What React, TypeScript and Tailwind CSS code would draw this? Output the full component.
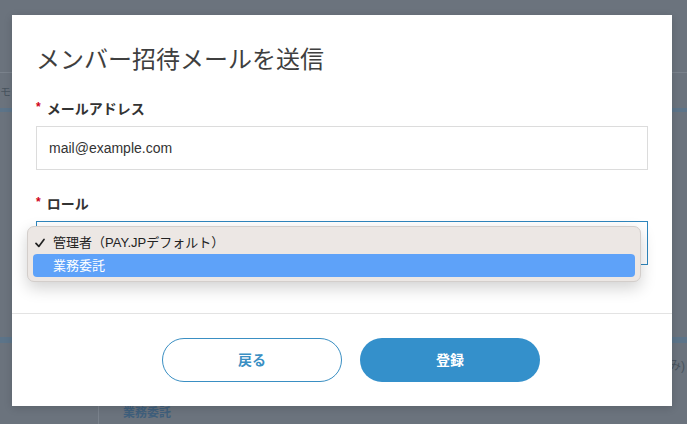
import React from 'react';

const FONT = '"Liberation Sans", "Noto Sans CJK JP", sans-serif';

/** 背景のページ（オーバーレイで暗くなっている部分） */
function BackgroundPage() {
  return (
    <div className="absolute inset-0 flex flex-col bg-[#6b737d] text-[#48535e]">
      <div className="h-[73px] shrink-0 border-b border-[#7a828c]" />
      <div className="mt-[11px] h-[16px] text-[11px] leading-[16px]">モ</div>
      <div className="mt-[8px] h-[5px] bg-[#5c7489]" />
      <div className="mt-[225px] h-[6px] bg-[#5c7489]" />
      <div className="mt-[16px] flex justify-end pr-[2px] text-[12px] leading-[14px]">み)</div>
      <div className="mt-[25px] flex h-[30px]">
        <div className="ml-[98px] w-px bg-[#7a828c]" />
        <div className="ml-[24px] pt-[6px] text-[12px] font-bold text-[#3f5f7c]">業務委託</div>
      </div>
    </div>
  );
}

function Label({ children }: { children: React.ReactNode }) {
  return (
    <div className="flex h-[20px] items-center text-[14px] font-bold text-[#333]">
      <span className="mr-[6px] -mt-[4px] text-[12px] text-[#d0021b]">*</span>
      {children}
    </div>
  );
}

function CheckIcon() {
  return (
    <svg width="10" height="10" viewBox="0 0 10 10" fill="none">
      <path d="M1 5.4 L3.8 8.4 L9 1.4" stroke="#222" strokeWidth="1.7" strokeLinecap="round" strokeLinejoin="round" />
    </svg>
  );
}

/** 開いているロール選択メニュー */
function RoleMenu() {
  return (
    <div className="absolute -left-[10px] top-[4px] w-[614px] rounded-[7px] border border-[#d3cecb] bg-[#ece7e4] py-[4px] shadow-[0_6px_16px_rgba(0,0,0,0.18)]">
      <div className="mx-[5px] flex h-[23px] items-center text-[13px] text-[#222]">
        <span className="flex w-[20px] pl-[2px]">
          <CheckIcon />
        </span>
        管理者（PAY.JPデフォルト）
      </div>
      <div className="mx-[5px] flex h-[23px] items-center rounded-[4px] bg-[#5ea2f9] pl-[20px] text-[13px] text-white">
        業務委託
      </div>
    </div>
  );
}

export default function App() {
  return (
    <div className="relative h-[424px] w-[687px] overflow-hidden" style={{ fontFamily: FONT }}>
      <BackgroundPage />

      {/* Modal */}
      <div className="absolute left-[12px] top-[15px] flex h-[391px] w-[660px] flex-col bg-white shadow-[0_2px_8px_rgba(0,0,0,0.15)]">
        <div className="border-b border-[#e3e3e3] px-6 pt-[29px] pb-[48px]">
          <h2 className="text-[24px] leading-[32px] font-normal text-[#3f3f3f]">メンバー招待メールを送信</h2>

          <div className="mt-[23px]">
            <Label>メールアドレス</Label>
            <div className="mt-[7px] flex h-[44px] items-center border border-[#dcdcdc] px-[12px] text-[14px] text-[#333]">
              mail@example.com
            </div>
          </div>

          <div className="mt-[24px]">
            <Label>ロール</Label>
            <div className="relative mt-[7px] h-[44px] border border-[#2f86bd]">
              <RoleMenu />
            </div>
          </div>
        </div>

        {/* Footer */}
        <div className="flex flex-1 items-center justify-center gap-[18px] pl-[18px]">
          <button className="h-[44px] w-[180px] rounded-full border border-[#3a8fc3] bg-white text-[14px] font-bold text-[#3a8fc3]">
            戻る
          </button>
          <button className="h-[44px] w-[180px] rounded-full bg-[#3490cb] text-[14px] font-bold text-white">
            登録
          </button>
        </div>
      </div>
    </div>
  );
}
